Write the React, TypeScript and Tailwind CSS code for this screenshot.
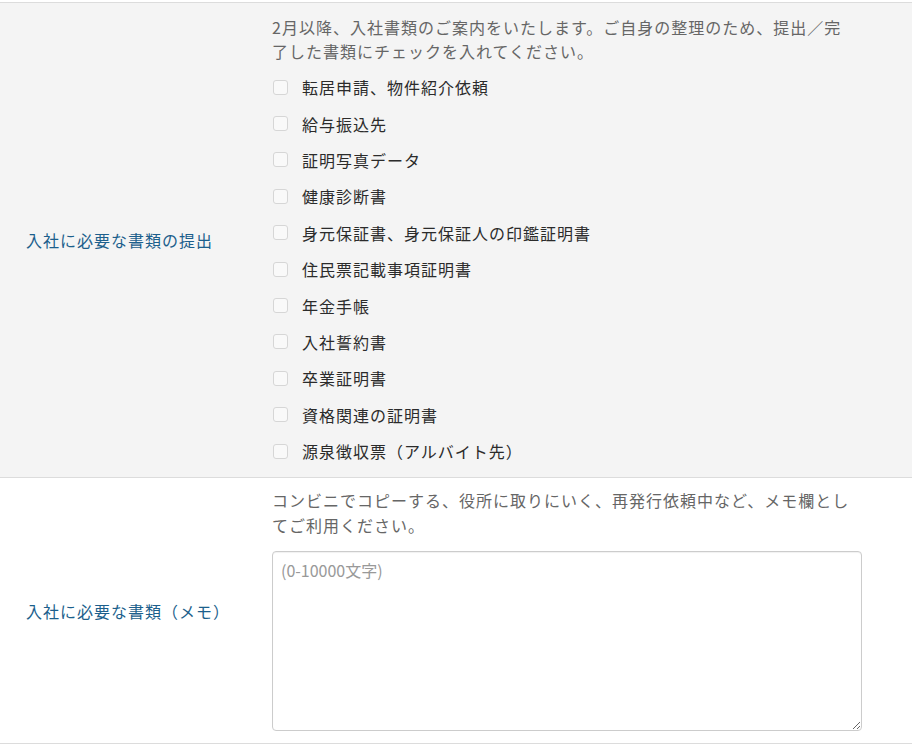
import React, { useState } from "react";

const documents = [
  "転居申請、物件紹介依頼",
  "給与振込先",
  "証明写真データ",
  "健康診断書",
  "身元保証書、身元保証人の印鑑証明書",
  "住民票記載事項証明書",
  "年金手帳",
  "入社誓約書",
  "卒業証明書",
  "資格関連の証明書",
  "源泉徴収票（アルバイト先）",
];

const font = { fontFamily: '"Noto Sans CJK JP", "Noto Sans", sans-serif' };

const Row = ({
  label,
  children,
  shaded,
}: {
  label: string;
  children: React.ReactNode;
  shaded?: boolean;
}) => (
  <div
    className={`flex border-b border-[#dcdcdc] ${shaded ? "bg-[#f4f4f4]" : "bg-white"}`}
  >
    <div className="w-[272px] shrink-0 flex items-center pl-[26px] text-[16px] tracking-[1px] text-[#1c5f8c]">
      {label}
    </div>
    <div className="flex-1 pr-[50px]">{children}</div>
  </div>
);

export default function App() {
  const [checked, setChecked] = useState<Record<number, boolean>>({});
  const [memo, setMemo] = useState("");

  return (
    <div className="w-[912px] bg-white pt-[2px]" style={font}>
      <div className="border-t border-[#dcdcdc]">
        <Row label="入社に必要な書類の提出" shaded>
          <div className="pt-[12px] pb-[8px]">
            <p className="max-w-[582px] text-[16px] leading-[24px] tracking-[1px] text-[#666]">
              2月以降、入社書類のご案内をいたします。ご自身の整理のため、提出／完了した書類にチェックを入れてください。
            </p>
            <ul className="mt-[6px]">
              {documents.map((doc, i) => (
                <li key={doc} className="h-[36.4px] flex items-center">
                  <label className="flex items-center cursor-pointer">
                    <span
                      onClick={() => setChecked((c) => ({ ...c, [i]: !c[i] }))}
                      className={`w-[15px] h-[15px] rounded-[3px] border border-[#d6d6d6] ml-[1px] mr-[14px] flex items-center justify-center ${
                        checked[i] ? "bg-[#1c5f8c] border-[#1c5f8c]" : "bg-[#f9f9f9]"
                      }`}
                    >
                      {checked[i] && (
                        <svg viewBox="0 0 12 12" className="w-[10px] h-[10px]">
                          <path d="M2 6.5l2.5 2.5L10 3.5" fill="none" stroke="white" strokeWidth="2" />
                        </svg>
                      )}
                    </span>
                    <span className="text-[16px] tracking-[1px] text-[#2b2b2b]">{doc}</span>
                  </label>
                </li>
              ))}
            </ul>
          </div>
        </Row>
        <Row label="入社に必要な書類（メモ）">
          <div className="pt-[10px] pb-[12px]">
            <p className="max-w-[582px] text-[16px] leading-[25px] tracking-[1px] text-[#666]">
              コンビニでコピーする、役所に取りにいく、再発行依頼中など、メモ欄としてご利用ください。
            </p>
            <textarea
              value={memo}
              onChange={(e) => setMemo(e.target.value)}
              placeholder="(0-10000文字)"
              className="mt-[13px] block w-[590px] h-[180px] rounded-[4px] border border-[#cccccc] px-[8px] py-[6px] text-[16px] leading-[24px] text-[#333] placeholder:text-[#999] shadow-[inset_0_1px_1px_rgba(0,0,0,0.06)] outline-none"
              style={font}
            />
          </div>
        </Row>
      </div>
    </div>
  );
}
